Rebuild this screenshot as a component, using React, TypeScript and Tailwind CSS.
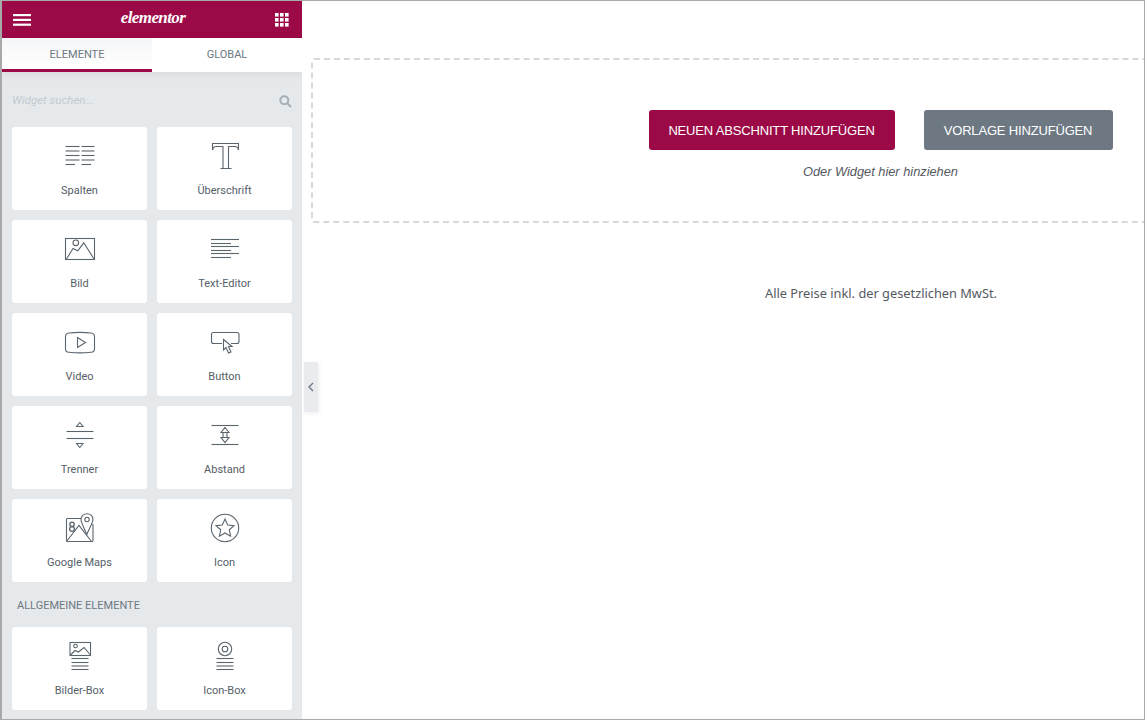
import { ReactNode } from "react";

const Lines = ({ rows }: { rows: [number, number, number][] }) => (
  <>
    {rows.map(([x1, x2, y]) => (
      <line key={`${x1}-${y}`} x1={x1} x2={x2} y1={y} y2={y} />
    ))}
  </>
);

const boxLines: [number, number, number][] = [
  [13.5, 30.5, 23.5],
  [13.5, 30.5, 27.5],
  [13.5, 30.5, 31],
  [13.5, 30.5, 34.5],
];

const IconSvg = ({ children }: { children: ReactNode }) => (
  <svg
    width="44"
    height="36"
    viewBox="0 0 44 36"
    fill="none"
    stroke="#5a656e"
    strokeWidth="1.1"
    className="block"
  >
    {children}
  </svg>
);

const icons: Record<string, ReactNode> = {
  Spalten: (
    <Lines
      rows={[
        [7.5, 21.5, 11.5],
        [7.5, 21.5, 16],
        [7.5, 21.5, 20.5],
        [7.5, 21.5, 25],
        [7.5, 17, 29.5],
        [23.5, 36.5, 11.5],
        [23.5, 36.5, 16],
        [23.5, 36.5, 20.5],
        [23.5, 36.5, 25],
        [23.5, 33, 29.5],
      ]}
    />
  ),
  "Überschrift": (
    <path d="M9.5 15V8.5H35.5V15M9.5 15C10 13 11 11.5 13 11.5H20V33M35.5 15C35 13 34 11.5 32 11.5H25.5V33M17.5 33.5H28.5" />
  ),
  Bild: (
    <>
      <rect x="7.5" y="10.5" width="29" height="21" />
      <circle cx="17.8" cy="14.8" r="2.8" />
      <path d="M8.5 31L15 20.5L19.8 22.8L25.8 14.8L36 31" />
    </>
  ),
  "Text-Editor": (
    <Lines
      rows={[
        [8, 36, 11.5],
        [8, 28, 15.5],
        [8, 36, 18.5],
        [8, 28, 22.5],
        [8, 36, 25.5],
        [8, 28, 29.5],
      ]}
    />
  ),
  Video: (
    <>
      <path d="M11 12C18 11.2 26 11.2 33 12C35.5 12.3 36.5 13.5 36.5 15.5V28C36.5 30 35.5 31 33 31.3C26 32 18 32 11 31.3C8.5 31 7.5 30 7.5 28V15.5C7.5 13.5 8.5 12.3 11 12Z" />
      <path d="M19.5 16.5V26.5L27.5 21.5Z" />
    </>
  ),
  Button: (
    <>
      <path d="M19 22.5H10.5C9 22.5 8.5 21.5 8.5 20.5V13.5C8.5 12 9.5 11.5 10.5 11.5H34C35.5 11.5 36 12.5 36 13.5V20.5C36 21.5 35.5 22.5 34 22.5H28" />
      <path
        d="M20.5 18.5V29L23 26.5L25.5 32L28 31L25.5 25.5L29 25.5Z"
        fill="#fff"
      />
    </>
  ),
  Trenner: (
    <>
      <Lines
        rows={[
          [8.5, 35.5, 17.5],
          [8.5, 35.5, 24.5],
        ]}
      />
      <path d="M21.8 8.5L25 12.5H18.5Z" />
      <path d="M18.5 29.5H25L21.8 33.5Z" />
    </>
  ),
  Abstand: (
    <>
      <Lines
        rows={[
          [8.5, 35.5, 11.5],
          [8.5, 35.5, 30.5],
        ]}
      />
      <path d="M22 13.5L26 18.5H24V23.5H26L22 28.5L18 23.5H20V18.5H18Z" />
      <line x1="20" x2="24" y1="18.5" y2="18.5" />
      <line x1="20" x2="24" y1="23.5" y2="23.5" />
    </>
  ),
  "Google Maps": (
    <>
      <path d="M23 11.5H9.5C9 11.5 8.5 12 8.5 12.5V33.5C8.5 34 9 34.5 9.5 34.5H34C34.6 34.5 35 34 35 33.5V17" />
      <path d="M8.5 34.5L21 18.5L33.5 34.5" />
      <path
        d="M29 6.8C25.5 6.8 23 9.3 23 12.5C23 15.5 26.5 22 28.8 27.5C31 22 35 15.5 35 12.5C35 9.3 32.5 6.8 29 6.8Z"
        fill="#fff"
      />
      <circle cx="29" cy="12.5" r="2.2" />
      <circle cx="14" cy="17.3" r="2.2" strokeWidth="1.3" />
      <circle cx="14" cy="22" r="2.4" strokeWidth="1.3" />
    </>
  ),
  Icon: (
    <>
      <circle cx="22" cy="21" r="13.7" />
      <path d="M22 12L24.7 18L31 18.6L26.3 22.8L27.6 29.2L22 26L16.4 29.2L17.7 22.8L13 18.6L19.3 18Z" />
    </>
  ),
  "Bilder-Box": (
    <>
      <rect x="12" y="7.5" width="20.5" height="13" />
      <circle cx="17.5" cy="11" r="1.8" />
      <path d="M12.5 20L17 15.5L20.5 17L26 12.5L32 19.5" />
      <Lines rows={boxLines} />
    </>
  ),
  "Icon-Box": (
    <>
      <circle cx="22" cy="14" r="6.7" />
      <circle cx="22" cy="14" r="2.8" />
      <Lines rows={boxLines} />
    </>
  ),
};

const WidgetCard = ({ name }: { name: string }) => (
  <div className="flex h-[83px] flex-col items-center rounded-[3px] bg-white pt-2">
    <IconSvg>{icons[name]}</IconSvg>
    <span className="mt-[13px] text-[11px] leading-[14px] text-[#556068]">{name}</span>
  </div>
);

const WidgetGrid = ({ names }: { names: string[] }) => (
  <div className="grid grid-cols-[135px_135px] gap-x-[10px] gap-y-[10px]">
    {names.map(name => (
      <WidgetCard key={name} name={name} />
    ))}
  </div>
);

export default function App() {
  return (
    <div className="flex h-[720px] w-[1145px] overflow-hidden border border-l-2 border-[#a9a9a9] bg-white font-['Roboto',sans-serif]">
      <aside className="flex w-[300px] shrink-0 flex-col overflow-hidden bg-[#e6e9ec]">
        <header className="flex h-[37px] shrink-0 items-center justify-between bg-[#9b0a46] pl-[11px] pr-[13px]">
          <svg width="18" height="12" viewBox="0 0 18 12" fill="#fff">
            <rect y="0" width="18" height="2.2" />
            <rect y="4.8" width="18" height="2.2" />
            <rect y="9.6" width="18" height="2.2" />
          </svg>
          <span className="pb-[4px] font-['Liberation_Serif',serif] text-[17px] font-bold italic leading-none tracking-[-0.6px] text-white">
            elementor
          </span>
          <svg width="14" height="14" viewBox="0 0 14 14" fill="#fff">
            <rect x="0" y="0" width="3.6" height="3.6" />
            <rect x="5" y="0" width="3.6" height="3.6" />
            <rect x="10" y="0" width="3.6" height="3.6" />
            <rect x="0" y="5" width="3.6" height="3.6" />
            <rect x="5" y="5" width="3.6" height="3.6" />
            <rect x="10" y="5" width="3.6" height="3.6" />
            <rect x="0" y="10" width="3.6" height="3.6" />
            <rect x="5" y="10" width="3.6" height="3.6" />
            <rect x="10" y="10" width="3.6" height="3.6" />
          </svg>
        </header>

        <nav className="flex h-[34px] shrink-0 text-[11px] text-[#6d7882] shadow-[0_2px_8px_rgba(0,0,0,0.07)]">
          <div className="flex flex-1 items-center justify-center border-b-[3px] border-[#9b0a46] bg-gradient-to-b from-[#f5f6f7] to-white pt-[4px]">
            ELEMENTE
          </div>
          <div className="flex flex-1 items-center justify-center bg-white pt-[1px]">GLOBAL</div>
        </nav>

        <div className="flex h-[55px] shrink-0 items-center justify-between pl-[10px] pr-[10px]">
          <span className="pt-[2px] text-[11.5px] italic text-[#c2cbd2]">Widget suchen...</span>
          <svg className="mt-[3px]" width="13" height="13" viewBox="0 0 13 13" fill="none" stroke="#a4afb7" strokeWidth="2">
            <circle cx="5.3" cy="5.3" r="4" />
            <line x1="8.3" y1="8.3" x2="12" y2="12" />
          </svg>
        </div>

        <div className="px-[10px]">
          <WidgetGrid
            names={[
              "Spalten",
              "Überschrift",
              "Bild",
              "Text-Editor",
              "Video",
              "Button",
              "Trenner",
              "Abstand",
              "Google Maps",
              "Icon",
            ]}
          />
          <h2 className="pb-[14px] pl-[5px] pt-[17px] text-[11px] font-normal leading-[14px] text-[#6d7882]">
            ALLGEMEINE ELEMENTE
          </h2>
          <WidgetGrid names={["Bilder-Box", "Icon-Box"]} />
        </div>
      </aside>

      <main className="relative min-w-0 flex-1 overflow-hidden pl-[9px] pt-[57px]">
        <section className="flex h-[165px] w-[1139px] flex-col items-center rounded-[3px] border-2 border-dashed border-[#d5d8dc] pt-[50px]">
          <div className="flex gap-[29px] font-['Liberation_Sans',sans-serif] text-[13px] tracking-[-0.17px] text-white">
            <button className="flex h-10 w-[246px] items-center justify-center rounded-[3px] bg-[#9b0a46] pt-[1px]">
              NEUEN ABSCHNITT HINZUFÜGEN
            </button>
            <button className="flex h-10 w-[189px] items-center justify-center rounded-[3px] bg-[#6d7882] pt-[1px]">
              VORLAGE HINZUFÜGEN
            </button>
          </div>
          <p className="mt-[13px] font-['Liberation_Sans',sans-serif] text-[12.8px] italic leading-[17px] text-[#54595f]">
            Oder Widget hier hinziehen
          </p>
        </section>
        <p className="mt-[60px] w-[1140px] text-center font-['Noto_Sans',sans-serif] text-[12.8px] leading-[20px] text-[#54595f]">
          Alle Preise inkl. der gesetzlichen MwSt.
        </p>

        <div className="absolute left-[2px] top-[361px] flex h-[50px] w-[14px] items-center justify-center bg-[#e9ebee] shadow-[1px_1px_4px_rgba(0,0,0,0.08)]">
          <svg width="6" height="10" viewBox="0 0 6 10" fill="none" stroke="#6d7882" strokeWidth="1.4">
            <path d="M5 1L1 5L5 9" />
          </svg>
        </div>
      </main>
    </div>
  );
}
